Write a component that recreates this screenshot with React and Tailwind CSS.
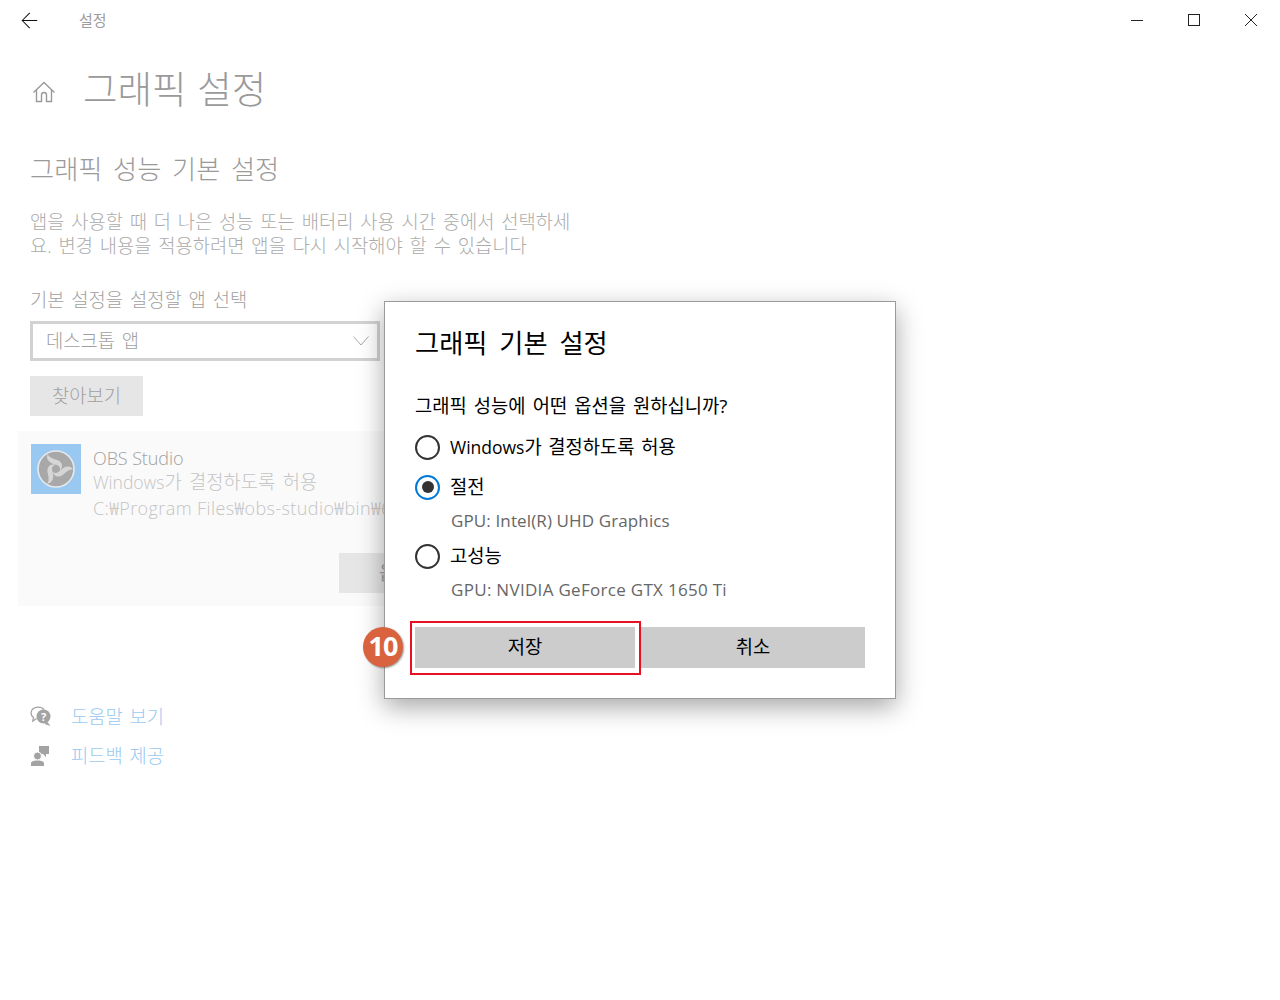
import { ArrowLeft } from "lucide-react";

const font = { fontFamily: '"Open Sans", "Noto Sans CJK KR", sans-serif' };

function HomeIcon() {
  return (
    <svg width="24" height="24" viewBox="0 0 24 24" fill="none" stroke="#9a9a9a" strokeWidth="1.4">
      <path d="M1.5 12.5 12 2.5l10.5 10" />
      <path d="M4.5 10v11.5h5V15a2.5 2.5 0 0 1 5 0v6.5h5V10" />
    </svg>
  );
}

function HelpIcon() {
  return (
    <svg width="22" height="22" viewBox="0 0 22 22">
      <path d="M14 3.500C12.800 2 10.600 1.200 8 1.200 4 1.200 1 3.700 1 7c0 1.900 1 3.500 2.500 4.600L2.800 15l3.800-2.500" fill="none" stroke="#a3a3a3" strokeWidth="1.300" />
      <circle cx="13.500" cy="10.500" r="7" fill="#a3a3a3" />
      <path d="m17 15.500 3.500 4.500-6-2z" fill="#a3a3a3" />
      <text x="13.500" y="14.500" textAnchor="middle" fontSize="11" fontWeight="700" fill="#fff" fontFamily="Open Sans">?</text>
    </svg>
  );
}

function FeedbackIcon() {
  return (
    <svg width="20" height="22" viewBox="0 0 20 22" fill="#a3a3a3">
      <path d="M9 1h10v8h-3v3l-3-3H9z" />
      <circle cx="7.500" cy="11" r="4" stroke="#fff" strokeWidth="1" />
      <path d="M1 21v-2.500C1 16.500 3 15.500 7.500 15.500s6.500 1 6.500 3V21z" />
    </svg>
  );
}

function ObsIcon() {
  const blade = "M12 6.500C10 11 14 14.500 19 15.500 22 16.200 23 18.500 22 20.500 25.500 17.500 24.500 13 20 11.500 16 10.200 13.500 9.500 12 6.500Z";
  return (
    <div className="w-[50px] h-[50px] bg-[#99c9f0] flex items-center justify-center">
      <svg width="38" height="38" viewBox="0 0 38 38">
        <circle cx="19" cy="19" r="18" fill="#a8a8a8" stroke="#e6e9ec" strokeWidth="1.600" />
        <g fill="#d6d6d6" transform="translate(19 19) scale(1.2) translate(-19 -19)">
          <path d={blade} />
          <path d={blade} transform="rotate(120 19 19)" />
          <path d={blade} transform="rotate(240 19 19)" />
        </g>
      </svg>
    </div>
  );
}

function Radio({ checked }) {
  if (checked) {
    return (
      <span className="w-[25px] h-[25px] rounded-full border-[2.500px] border-[#0078d7] flex items-center justify-center shrink-0">
        <span className="w-[12px] h-[12px] rounded-full bg-[#333333]" />
      </span>
    );
  }
  return <span className="w-[25px] h-[25px] rounded-full border-[2.500px] border-[#333333] shrink-0" />;
}

function Dialog() {
  return (
    <div className="absolute left-[384px] top-[301px] w-[512px] h-[398px] bg-white border border-[#9a9a9a] shadow-[0_8px_24px_rgba(0,0,0,0.35)] px-[30px] text-black">
      <h2 className="text-[26.250px] leading-[34px] mt-[24px] [word-spacing:5px]">그래픽 기본 설정</h2>
      <p className="text-[18.750px] leading-[24px] mt-[34px] [word-spacing:2.200px]">그래픽 성능에 어떤 옵션을 원하십니까?</p>
      <div className="flex items-center gap-[10px] mt-[15px] h-[28px] text-[18.750px] [word-spacing:1.800px]">
        <Radio />
        <span><span className="text-[17.500px]">Windows</span>가 결정하도록 허용</span>
      </div>
      <div className="flex items-center gap-[10px] mt-[12px] h-[28px] text-[18.750px]">
        <Radio checked />
        <span>절전</span>
      </div>
      <p className="text-[17px] leading-[24px] mt-[8px] ml-[36px] text-[#666666] tracking-[0.12px]">GPU: Intel(R) UHD Graphics</p>
      <div className="flex items-center gap-[10px] mt-[9px] h-[28px] text-[18.750px]">
        <Radio />
        <span>고성능</span>
      </div>
      <p className="text-[17px] leading-[24px] mt-[8px] ml-[36px] text-[#666666] tracking-[0.3px]">GPU: NVIDIA GeForce GTX 1650 Ti</p>
      <div className="flex gap-[6px] mt-[25px]">
        <button className="relative w-[220px] h-[41px] bg-[#cccccc] text-[18.750px]">
          저장
          <span className="absolute -left-[5px] -top-[6px] w-[231px] h-[54px] border-2 border-[#e81123]" />
          <span className="absolute -left-[52px] top-[0px] w-[40px] h-[40px] rounded-full bg-[#d9633f] text-white text-[27px] leading-[38px] font-bold tracking-[-1px] shadow-[1px_1px_2px_rgba(0,0,0,0.4)]">10</span>
        </button>
        <button className="w-[224px] h-[41px] bg-[#cccccc] text-[18.750px]">취소</button>
      </div>
    </div>
  );
}

export default function App() {
  return (
    <div className="relative w-[1280px] h-[1000px] bg-white overflow-hidden" style={font}>
      <div className="flex items-center justify-between h-[40px] pl-[17px] pr-[23px]">
        <div className="flex items-center">
          <ArrowLeft size={25} strokeWidth={1} color="#111111" />
          <span className="ml-[37px] text-[15px] text-[#9c9c9c]">설정</span>
        </div>
        <div className="flex items-center gap-[45px]">
          <span className="w-[12px] h-px bg-[#222222]" />
          <span className="w-[12px] h-[12px] border border-[#222222]" />
          <svg width="12" height="12" viewBox="0 0 12 12" stroke="#222222" strokeWidth="1"><path d="M0 0l12 12M12 0 0 12" /></svg>
        </div>
      </div>

      <div className="pl-[30px]">
        <div className="flex items-center mt-[26px] h-[46px]">
          <span className="ml-[2px] mt-[5px]"><HomeIcon /></span>
          <h1 className="ml-[27px] text-[37.500px] leading-[46px] font-light text-[#9a9a9a] [word-spacing:1px]">그래픽 설정</h1>
        </div>
        <h2 className="mt-[39px] text-[26.250px] leading-[36px] font-light text-[#9a9a9a] [word-spacing:3.800px]">그래픽 성능 기본 설정</h2>
        <p className="mt-[23px] w-[560px] text-[18.750px] leading-[24px] text-[#ababab] font-light [word-spacing:1.900px]">
          앱을 사용할 때 더 나은 성능 또는 배터리 사용 시간 중에서 선택하세
          <br />
          요. 변경 내용을 적용하려면 앱을 다시 시작해야 할 수 있습니다
        </p>
        <p className="mt-[30px] text-[18.750px] leading-[24px] text-[#a0a0a0] font-light [word-spacing:2px]">기본 설정을 설정할 앱 선택</p>
        <div className="mt-[9px] w-[350px] h-[40px] border-[3px] border-[#d2d2d2] flex items-center justify-between pl-[13px] pr-[8px]">
          <span className="text-[18.750px] text-[#a0a0a0] font-light [word-spacing:2px]">데스크톱 앱</span>
          <svg width="16" height="10" viewBox="0 0 16 10" fill="none" stroke="#a8a8a8" strokeWidth="1"><path d="M.5.5 8 9l7.500-8.500" /></svg>
        </div>
        <button className="block mt-[15px] w-[113px] h-[40px] pt-px bg-[#e6e6e6] text-[18.750px] text-[#a0a0a0] font-light">찾아보기</button>
      </div>

      <div className="ml-[18px] mt-[15px] w-[400px] h-[175px] bg-[#fafafa] relative">
        <div className="flex pl-[13px] pt-[13px]">
          <ObsIcon />
          <div className="ml-[12px] w-[292px] overflow-hidden whitespace-nowrap">
            <p className="text-[18px] leading-[26px] text-[#a0a0a0] tracking-[-0.1px] font-light mt-[1px]">OBS Studio</p>
            <p className="text-[18.750px] leading-[26px] text-[#c4c4c4] font-light mt-[-2px] [word-spacing:2.500px]"><span className="text-[17.500px]">Windows</span>가 결정하도록 허용</p>
            <p className="text-[18px] leading-[26px] text-[#c4c4c4] tracking-[0.4px] font-light">C:₩Program Files₩obs-studio₩bin₩64bit₩obs64.exe</p>
          </div>
        </div>
        <button className="absolute left-[321px] top-[122px] w-[60px] h-[40px] bg-[#e6e6e6] text-[18.750px] text-[#a0a0a0] pl-[40px] text-left whitespace-nowrap overflow-hidden">옵션</button>
      </div>

      <div className="pl-[30px] mt-[100px] flex flex-col gap-[17px]">
        <div className="flex items-center h-[22px]">
          <HelpIcon />
          <span className="ml-[19px] text-[18.750px] text-[#99c9f0] font-light [word-spacing:2px]">도움말 보기</span>
        </div>
        <div className="flex items-center h-[22px]">
          <FeedbackIcon />
          <span className="ml-[21px] text-[18.750px] text-[#99c9f0] font-light [word-spacing:2px]">피드백 제공</span>
        </div>
      </div>

      <Dialog />
    </div>
  );
}
